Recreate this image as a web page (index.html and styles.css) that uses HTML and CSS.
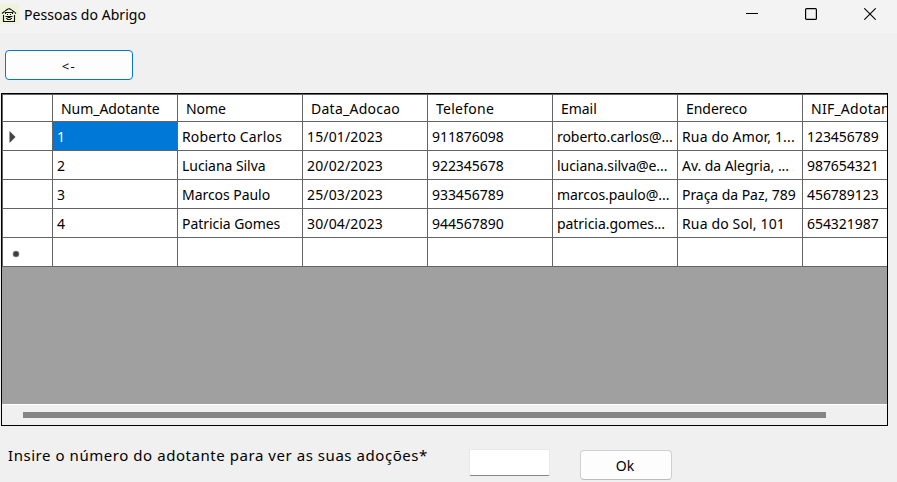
FILE: index.html
```html
<!DOCTYPE html>
<html lang="pt">
<head>
<meta charset="utf-8">
<title>Pessoas do Abrigo</title>
<link rel="stylesheet" href="styles.css">
</head>
<body>
<header class="titlebar">
  <svg class="app-icon" width="19" height="20" viewBox="0 0 19 20"><rect width="19" height="20" fill="#eff3dc"/><g fill="none" stroke="#111" stroke-width="1.100"><path d="M2 9.500 4.500 7.500 7 5.500l2-.8 2 .8 2.500 2L16 9.500" stroke-dasharray="3.500 .4"/><path d="M3.500 11v6.500h11V11"/><path d="M5.500 10V8.500h7V10M7 10.500h1m2 0h1M5.500 12.500h7M6 14.500h1.500m3 0H12M7.500 13.500h3M7 15.500h4"/></g></svg>
  <h1 class="title">Pessoas do Abrigo</h1>
  <div class="controls">
    <svg width="12" height="12" viewBox="0 0 12 12"><path d="M0 5.500h12" stroke="#000"/></svg>
    <svg width="12" height="12" viewBox="0 0 12 12"><rect x=".6" y=".6" width="10.800" height="10.800" rx="1" fill="none" stroke="#000" stroke-width="1.200"/></svg>
    <svg width="12" height="12" viewBox="0 0 12 12"><path d="m.3.3 11.400 11.400m0-11.400L.3 11.700" stroke="#000" stroke-width="1.100"/></svg>
  </div>
</header>
<main>
  <button class="back">&lt;-</button>
  <section class="grid">
    <table>
      <colgroup><col class="marker"><col><col><col><col><col><col><col></colgroup>
      <thead><tr><th></th><th>Num_Adotante</th><th>Nome</th><th class="wide">Data_Adocao</th><th class="wide">Telefone</th><th>Email</th><th>Endereco</th><th class="wide">NIF_Adotante</th></tr></thead>
      <tbody>
        <tr><td class="mark"><svg width="7" height="12" viewBox="0 0 7 12"><path d="M.5 0 6.500 6l-6 6z" fill="#444"/></svg></td><td class="selected">1</td><td class="wide">Roberto Carlos</td><td class="wide">15/01/2023</td><td>911876098</td><td>roberto.carlos@...</td><td class="wide">Rua do Amor, 1...</td><td>123456789</td></tr>
        <tr><td></td><td>2</td><td>Luciana Silva</td><td class="wide">20/02/2023</td><td>922345678</td><td>luciana.silva@e...</td><td>Av. da Alegria, ...</td><td>987654321</td></tr>
        <tr><td></td><td>3</td><td>Marcos Paulo</td><td class="wide">25/03/2023</td><td>933456789</td><td>marcos.paulo@...</td><td>Praça da Paz, 789</td><td>456789123</td></tr>
        <tr><td></td><td>4</td><td>Patricia Gomes</td><td class="wide">30/04/2023</td><td>944567890</td><td>patricia.gomes...</td><td class="wide">Rua do Sol, 101</td><td>654321987</td></tr>
        <tr><td class="mark new"><svg width="8" height="8" viewBox="0 0 8 8"><circle cx="4" cy="4" r="3.300" fill="#777"/><circle cx="4" cy="4" r="2.300" fill="#3c3c3c"/></svg></td><td></td><td></td><td></td><td></td><td></td><td></td><td></td></tr>
      </tbody>
    </table>
    <div class="scrollbar"><div class="thumb"></div></div>
  </section>
  <form class="lookup">
    <label for="num">Insire o número do adotante para ver as suas adoções*</label>
    <input id="num" type="text">
    <button type="button" class="ok">Ok</button>
  </form>
</main>
</body>
</html>
```
FILE: styles.css
```css
* { box-sizing: border-box; }
body { margin: 0; height: 482px; overflow: hidden; background: #f0f0f0; color: #000; font: 14px "Noto Sans", sans-serif; }
.titlebar { display: flex; height: 33px; background: #f3f3f3; }
.app-icon { margin-top: 4px; }
.title { margin: 5px 0 0 5px; font-size: 14px; line-height: 20px; font-weight: 400; letter-spacing: .05px; }
.controls { display: flex; gap: 47px; margin: 8px 21px 0 auto; }
.controls svg:first-child { margin-left: 1px; }
button { font: inherit; padding: 0; background: #fdfdfd; border-radius: 4px; color: #000; }
.back { display: block; width: 128px; height: 30px; margin: 17px 0 0 5px; padding-top: 1px; border: 1px solid #0078d4; font-size: 13px; letter-spacing: 1.500px; }
.grid { display: flex; flex-direction: column; width: 887px; height: 333px; margin: 13px 0 0 1px; border: 1px solid #000; background: #a0a0a0; overflow: hidden; }
table { width: 926px; table-layout: fixed; border-collapse: separate; border-spacing: 0; border-left: 1px solid #646464; border-top: 1px solid #646464; background: #fff; }
col { width: 125px; }
.marker { width: 50px; }
th, td { height: 29px; padding: 2px 0 0 4px; border-right: 1px solid #646464; border-bottom: 1px solid #646464; font-weight: 400; text-align: left; line-height: 20px; white-space: nowrap; letter-spacing: -.05px; }
th { height: 27px; padding-left: 8px; }
.wide { letter-spacing: .15px; }
th.wide { letter-spacing: .25px; }
.selected { background: #0078d7; color: #fff; }
.mark { padding: 0 0 0 6px; }
.mark svg { display: block; margin-top: 2px; }
.new { padding-left: 9px; }
.new svg { margin-top: 4px; }
.scrollbar { height: 21px; margin-top: auto; padding: 7px 0 0 21px; border-top: 1px solid #fff; background: #f0f0f0; }
.thumb { width: 803px; height: 6px; background: #858585; }
.lookup { display: flex; align-items: flex-start; margin-top: 17px; padding-left: 8px; }
.lookup label { width: 461px; margin-top: 1px; font-size: 15px; line-height: 22px; letter-spacing: .55px; white-space: nowrap; }
.lookup input { width: 81px; height: 27px; margin-top: 6px; padding: 0 4px; font: inherit; border: 1px solid #e8e8e8; border-bottom-color: #868686; border-radius: 2px; background: #fff; }
.ok { width: 92px; height: 30px; margin: 7px 0 0 30px; padding-right: 2px; border: 1px solid #d0d0d0; border-bottom-color: #bcbcbc; }
```
